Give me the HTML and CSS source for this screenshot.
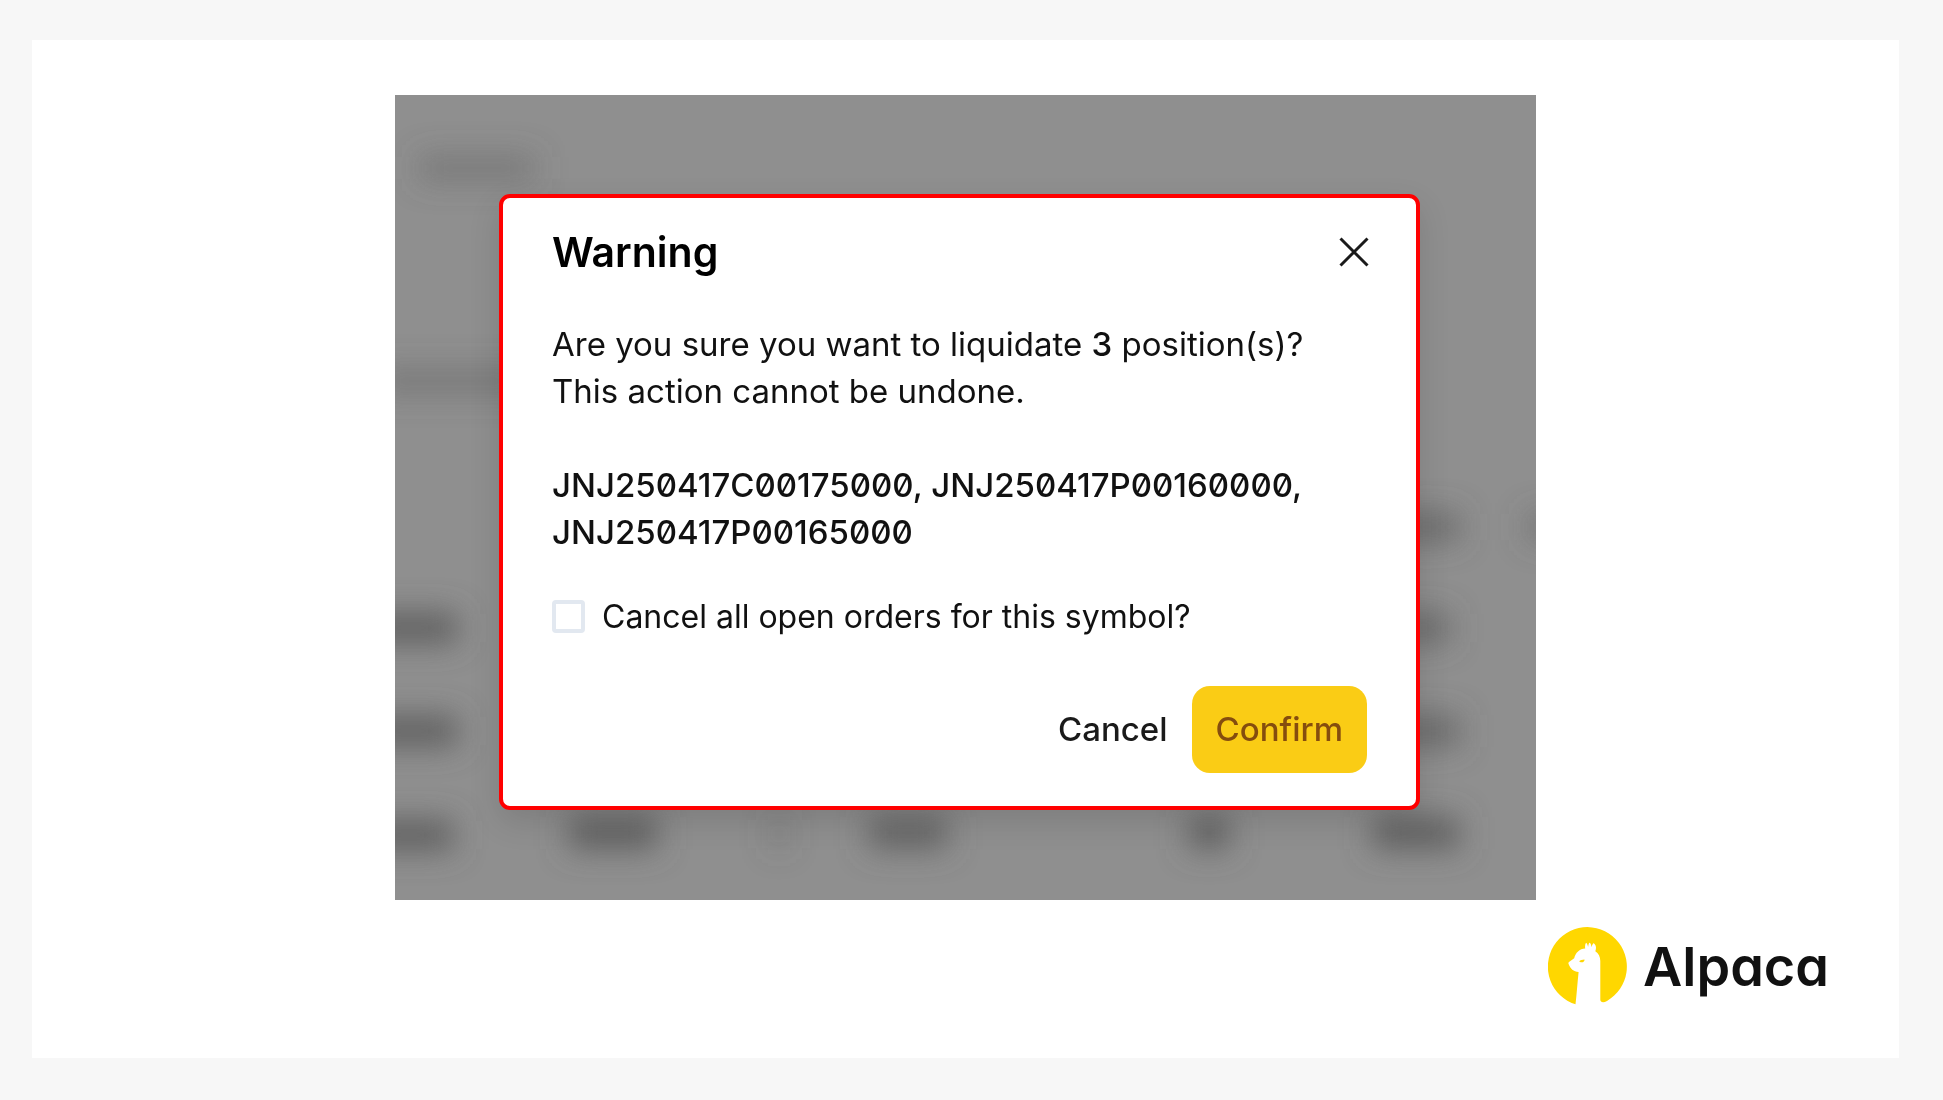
FILE: index.html
```html
<!DOCTYPE html>
<html lang="en">
<head>
<meta charset="utf-8">
<meta name="viewport" content="width=device-width, initial-scale=1">
<title>Alpaca – Warning</title>
<link rel="stylesheet" href="styles.css">
</head>
<body>
<main class="panel">
  <div class="stage">
    <svg class="backdrop" viewBox="0 0 1141 805" preserveAspectRatio="none" aria-hidden="true">
      <defs>
        <filter id="soft" x="-10%" y="-10%" width="120%" height="120%"><feGaussianBlur stdDeviation="15"/></filter>
      </defs>
      <g fill="#5e5e5e" filter="url(#soft)">
        <rect x="24" y="60" width="116" height="26" opacity=".45"/>
        <rect x="-20" y="273" width="150" height="26" opacity=".45"/>
        <rect x="-30" y="518" width="92" height="30"/>
        <rect x="-30" y="621" width="92" height="30"/>
        <rect x="-30" y="725" width="88" height="30"/>
        <rect x="174" y="722" width="88" height="32"/>
        <rect x="378" y="724" width="12" height="30" opacity=".5"/>
        <rect x="474" y="722" width="78" height="32" opacity=".9"/>
        <rect x="794" y="722" width="40" height="32"/>
        <rect x="978" y="722" width="86" height="32"/>
        <rect x="1000" y="418" width="64" height="28" opacity=".75"/>
        <rect x="1000" y="518" width="54" height="30" opacity=".75"/>
        <rect x="1000" y="620" width="64" height="32" opacity=".75"/>
        <rect x="1132" y="418" width="40" height="28" opacity=".5"/>
      </g>
    </svg>
    <section class="dialog" role="dialog" aria-labelledby="title">
      <header class="dialog-head">
        <h1 class="title" id="title">Warning</h1>
        <button class="close" type="button" aria-label="Close">
          <svg viewBox="0 0 30 30" width="30" height="30" aria-hidden="true"><path d="M1.5 1.5 28.500 28.500M28.500 1.500 1.500 28.500" fill="none" stroke="#1a1a1a" stroke-width="3"/></svg>
        </button>
      </header>
      <div class="message">
        <p>Are you sure you want to liquidate <span class="strong">3</span> position(s)?<br>This action cannot be undone.</p>
        <p class="strong symbols">JNJ250417C00175000, JNJ250417P00160000, JNJ250417P00165000</p>
      </div>
      <label class="option" for="cancel-orders">
        <input class="check" id="cancel-orders" type="checkbox">
        <span>Cancel all open orders for this symbol?</span>
      </label>
      <div class="actions">
        <button class="btn" type="button">Cancel</button>
        <button class="btn btn-confirm" type="button">Confirm</button>
      </div>
    </section>
  </div>
  <footer class="brand">
    <svg class="mark" viewBox="0 0 79 79" aria-hidden="true">
      <path fill="#ffd700" d="M27.500 77.300A39.500 39.500 0 1 1 59 73.900C55.500 76 52.300 75.500 52.300 72.500V34C52.300 29.500 50.500 26.500 47.300 24.200C48.500 21 48.200 18 45.800 16.300C44.800 16.300 44.300 18 43.500 20.200C43.200 17.500 42.500 15.700 41.200 15.700C40.600 17 40.300 18.500 40.100 20C39.600 18 39 16 38 15.700C37 17.300 36.900 19.200 37.200 21.500C31.500 21.500 27.500 26 26.200 31.200L21 35C20.300 35.700 20.300 36.500 20.700 37.300C22.300 41.500 25.500 45 30.600 45C29.500 55 28.800 66 27.500 77.300Z"/>
      <path fill="#ffd700" d="M31.300 34.300C32 32.500 34.500 33 36.500 32.400C36.800 34.300 35 35.500 33.500 35.300C32.500 35.200 31.500 35 31.300 34.300Z"/>
    </svg>
    <span class="wordmark">Alpaca</span>
  </footer>
</main>
</body>
</html>
```
FILE: styles.css
```css
* {
  box-sizing: border-box;
}

body {
  margin: 0;
  min-height: 100vh;
  display: flex;
  padding: 40px 44px 42px 32px;
  background: #f7f7f7;
  color: #111;
  font-family: Inter, "Liberation Sans", sans-serif;
}

.panel {
  flex: 1;
  min-width: 0;
  display: flex;
  flex-direction: column;
  align-items: center;
  gap: 27px;
  padding-top: 55px;
  background: #fff;
}

.stage {
  position: relative;
  overflow: hidden;
  width: 100%;
  max-width: 1141px;
  padding: 99px 116px 90px 104px;
  background: #8f8f8f;
}

.backdrop {
  position: absolute;
  inset: 0;
  width: 100%;
  height: 100%;
}

.dialog {
  position: relative;
  padding: 30px 49px 33px 49px;
  border: 4px solid #f00;
  border-radius: 11px;
  background: #fff;
  box-shadow: 0 12px 32px rgba(0, 0, 0, .12);
  font-size: 33px;
  line-height: 47px;
}

.dialog-head {
  display: flex;
  align-items: center;
  justify-content: space-between;
  margin-bottom: 45px;
}

.title {
  margin: 0;
  color: #000;
  font-size: 41px;
  font-weight: 600;
  line-height: 48px;
}

.close {
  display: flex;
  padding: 0;
  margin-right: -2px;
  border: 0;
  background: none;
}

.message {
  display: grid;
  gap: 47px;
  margin-bottom: 37px;
}

.message p {
  margin: 0;
}

.strong {
  font-weight: 500;
}

.symbols {
  font-feature-settings: "zero";
}

.option {
  display: flex;
  align-items: center;
  gap: 17px;
  margin-bottom: 46px;
  font-size: 32px;
}

.check {
  appearance: none;
  flex: none;
  width: 33px;
  height: 33px;
  margin: 0;
  border: 4px solid #e2e8f0;
  border-radius: 4px;
  background: #fff;
}

.actions {
  display: flex;
  justify-content: flex-end;
}

.btn {
  padding: 20px 24px;
  border: 0;
  border-radius: 18px;
  background: none;
  color: #1a1a1a;
  font: inherit;
  font-weight: 500;
}

.btn-confirm {
  background: #facc15;
  color: #854d0e;
}

.brand {
  display: flex;
  align-items: center;
  align-self: flex-end;
  gap: 16px;
  padding: 0 70px 50px 0;
}

.mark {
  width: 79px;
  height: 79px;
}

.wordmark {
  font-size: 54px;
  font-weight: 600;
  line-height: 60px;
  font-feature-settings: "cv11";
}
```
